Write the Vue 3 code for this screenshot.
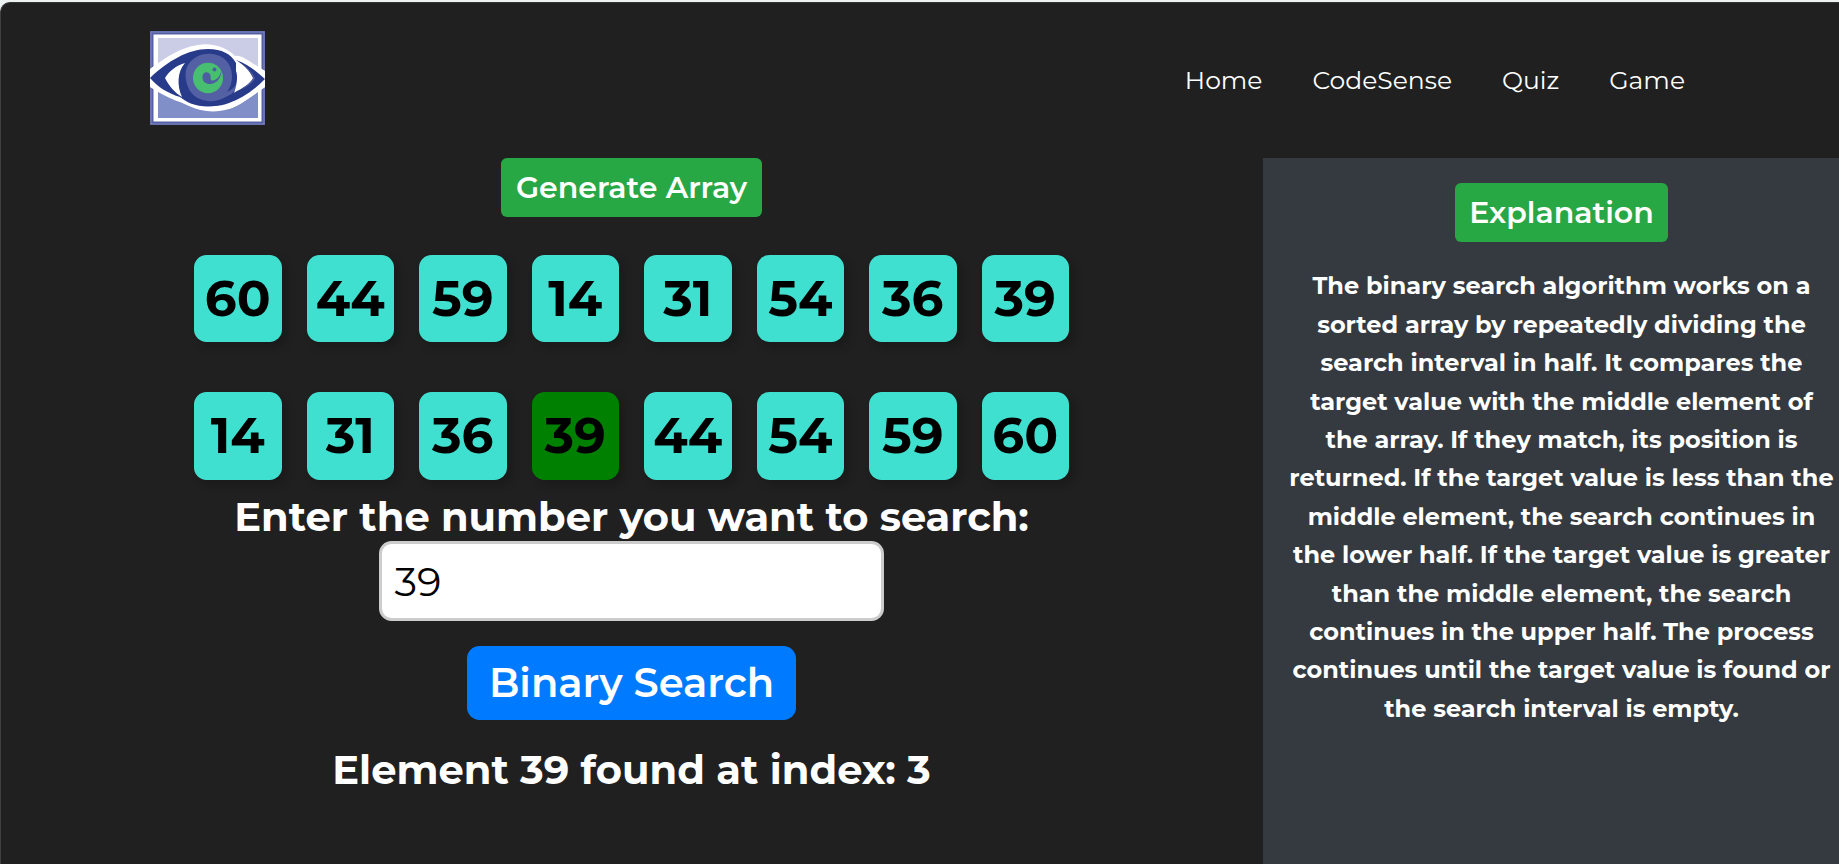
<script setup>
const links = ['Home', 'CodeSense', 'Quiz', 'Game']

const unsorted = [60, 44, 59, 14, 31, 54, 36, 39]
const sorted = [14, 31, 36, 39, 44, 54, 59, 60]
const target = 39

const explanation = [
  'The binary search algorithm works on a',
  'sorted array by repeatedly dividing the',
  'search interval in half. It compares the',
  'target value with the middle element of',
  'the array. If they match, its position is',
  'returned. If the target value is less than the',
  'middle element, the search continues in',
  'the lower half. If the target value is greater',
  'than the middle element, the search',
  'continues in the upper half. The process',
  'continues until the target value is found or',
  'the search interval is empty.',
]
</script>

<template>
  <div class="window">
    <header class="navbar">
      <svg class="logo" viewBox="0 0 115 94" aria-label="Logo">
        <rect width="115" height="94" fill="#5661a5" />
        <rect x="1" y="1" width="113" height="92" fill="none" stroke="#7d86bd" stroke-width="1" />
        <rect x="3.5" y="3.5" width="108" height="87" fill="#fff" />
        <rect x="8" y="7" width="100" height="40" fill="#cbcce6" />
        <rect x="8" y="47" width="100" height="40" fill="#818fc8" />
        <path d="M0 38 C12 29 31 15 52 13.4 C67 12.5 78 18 85 25 C91 23 100 31 115 40 V56 C103 64 91 74 79 78 C66 82 51 81 39 75 L30 71 C20 68 8 61 0 56Z" fill="#fff" />
        <path d="M0 47 C18 30 38 18 58 18 C72 18 81 23 86 32 C89 38 89 50 85.500 60 C82 70 72 75.500 58 75.500 C45 75.500 36 71 30 66 C17 62 8 56 0 47Z" fill="#283b8b" />
        <path d="M37 36 C42 26 52 22 62 23 C74 24 82 33 82 45 C82 52 80 57 77 61 C84 58 86 54 87 50 C87 60 80 67 70 69 C58 72 46 69 40 60 C36 53 34 43 37 36Z" fill="#5460a4" />
        <path d="M15 47 C19 40 27 34 35 32 C27 41 27 55 32 66 C25 62 19 55 15 47Z" fill="#fff" />
        <path d="M86 29 L86 40 C88 45 87 54 84 62 L79 78 C91 74 103 64 115 56 V40 C105 36 95 30 86 29Z" fill="#fff" />
        <path d="M86 29 C98 33 106 40 115 48 C103 60 91 68 79 72 C72 75 62 76 53 74 C66 71 77 66 87 60 C97 55 102 50 103 47 C100 40 94 34 86 29Z" fill="#283b8b" />
        <path d="M92 33 C97 37 101 41 103.500 47 C101 51 97 55 91 58.500 C99 55 103 51 105 47 C102 41 98 37 92 33Z" fill="#5460a4" />
        <ellipse cx="58" cy="47" rx="15" ry="15.200" fill="#48bf70" />
        <path d="M71.500 38.500 C70.500 45 67 49 62.500 49.500 C60 49.500 61 47 60.500 44.500 C59.500 40 53 40 52.500 45 C51.800 50.500 56 53.500 61 53 C67 52 71.500 47 71.500 38.500Z" fill="#4d5da2" />
        <circle cx="64.500" cy="38.500" r="2" fill="#4d5da2" />
      </svg>
      <nav class="links">
        <a v-for="text in links" :key="text">{{ text }}</a>
      </nav>
    </header>

    <div class="content">
      <main class="visualizer">
        <button class="btn generate">Generate Array</button>
        <div class="array">
          <div v-for="n in unsorted" :key="n" class="tile">{{ n }}</div>
        </div>
        <div class="array">
          <div v-for="n in sorted" :key="n" class="tile" :class="{ found: n === target }">{{ n }}</div>
        </div>
        <label class="prompt">Enter the number you want to search:</label>
        <div class="field">39</div>
        <button class="btn search">Binary Search</button>
        <p class="result">Element 39 found at index: 3</p>
      </main>

      <aside class="panel">
        <button class="btn explain">Explanation</button>
        <div class="text">
          <div v-for="line in explanation" :key="line" class="line">{{ line }}</div>
        </div>
      </aside>
    </div>
  </div>
</template>

<style>
body {
  background: #eff2f3;
}
</style>

<style scoped>
.window {
  box-sizing: border-box;
  height: 862px;
  margin-top: 2px;
  overflow: hidden;
  display: flex;
  flex-direction: column;
  background: #202020;
  border-left: 1px solid #404040;
  border-top: 1px solid #333;
  border-top-left-radius: 10px;
  color: #fff;
  font-family: Montserrat, Inter, "Liberation Sans", sans-serif;
  white-space: nowrap;
}
.navbar {
  display: flex;
  justify-content: space-between;
  height: 155px;
  box-sizing: border-box;
  padding: 28px 154px 0 149px;
}
.logo {
  display: block;
  width: 115px;
  height: 94px;
}
.links {
  display: flex;
  gap: 50px;
  font-size: 25px;
  line-height: 30px;
  padding-top: 34px;
}
.content {
  flex: 1;
  display: flex;
}
.visualizer {
  box-sizing: border-box;
  width: 1262px;
  padding-right: 1px;
  display: flex;
  flex-direction: column;
  align-items: center;
}
.btn {
  border: 0;
  padding: 0;
  display: flex;
  justify-content: center;
  align-items: center;
  color: #fff;
  background: #28a745;
  border-radius: 6px;
  font-family: inherit;
  font-weight: 600;
  font-size: 30px;
  height: 59px;
}
.generate {
  width: 261px;
  margin-bottom: 37.500px;
}
.array {
  display: flex;
  gap: 25px;
  margin-bottom: 50px;
}
.array + .array {
  margin-bottom: 0;
}
.tile {
  width: 87.500px;
  height: 87.500px;
  display: flex;
  align-items: center;
  justify-content: center;
  background: #40e0d0;
  border-radius: 12.500px;
  box-shadow: 5px 5px 10px rgba(0, 0, 0, 0.2);
  color: #000;
  font-size: 50px;
  font-weight: 700;
}
.tile.found {
  background: #008000;
}
.prompt {
  height: 61.500px;
  line-height: 73px;
  font-size: 40px;
  font-weight: 700;
}
.field {
  box-sizing: border-box;
  width: 505px;
  height: 80px;
  padding-left: 12.500px;
  display: flex;
  align-items: center;
  background: #fff;
  border: 3px solid #ccc;
  border-radius: 12.500px;
  color: #000;
  font-size: 40px;
  font-weight: 400;
}
.search {
  width: 329px;
  height: 74px;
  padding-bottom: 1px;
  margin-top: 25px;
  background: #007bff;
  border-radius: 12.500px;
  font-size: 40px;
}
.result {
  margin: 25px 0 0;
  line-height: 50px;
  font-size: 40px;
  font-weight: 700;
}
.panel {
  flex: 1;
  box-sizing: border-box;
  padding-top: 25px;
  margin-right: -21px;
  display: flex;
  flex-direction: column;
  align-items: center;
  background: #343a40;
}
.explain {
  width: 213px;
}
.text {
  margin-top: 25.400px;
  font-size: 24px;
  font-weight: 700;
  text-align: center;
}
.line {
  height: 38.400px;
  line-height: 38.400px;
}
</style>
